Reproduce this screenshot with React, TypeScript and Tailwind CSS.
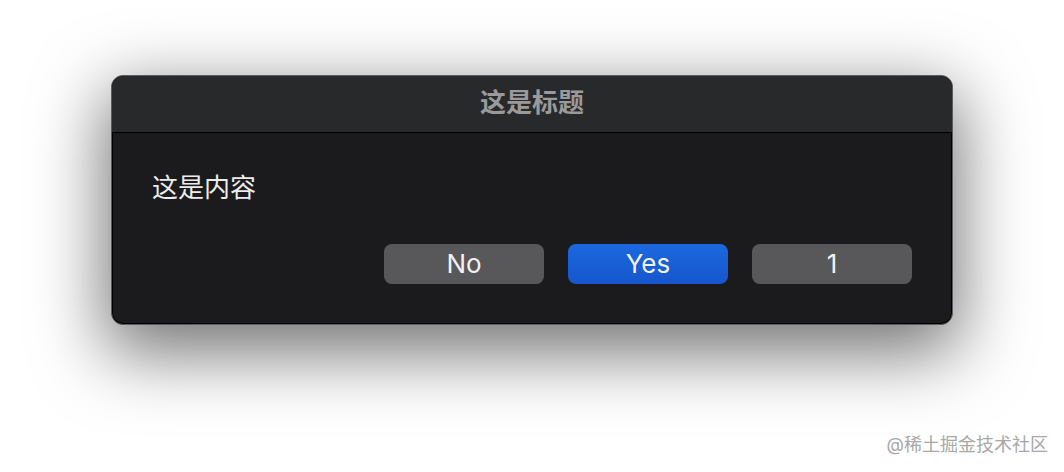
import React from "react";

const cjk = { fontFamily: 'Inter, "Noto Sans CJK SC", sans-serif' };

function Btn({ label, primary }: { label: string; primary?: boolean }) {
  return (
    <div
      className={
        "flex h-[40px] w-[160px] items-center justify-center rounded-[8px] text-[26px] leading-none text-[#f2f2f2] " +
        (primary
          ? "bg-gradient-to-b from-[#1c68e0] to-[#1656cc]"
          : "bg-[#58585a]")
      }
    >
      {label}
    </div>
  );
}

export default function App() {
  return (
    <div className="relative h-[472px] w-[1064px] overflow-hidden bg-white" style={cjk}>
      <div className="pl-[111px] pt-[75px]">
        <div className="flex w-[842px] flex-col overflow-hidden rounded-[12px] border border-[#5c5c5e] bg-[#1b1b1d] shadow-[0_22px_70px_6px_rgba(0,0,0,0.55),inset_0_0_0_1px_#000]">
          <div className="flex h-[57px] items-start justify-center border-b border-black bg-[#28292b] pt-[14px]">
            <span className="text-[26px] font-bold leading-none text-[#9a9a9c]">这是标题</span>
          </div>
          <div className="flex flex-col px-[40px] pt-[42px] pb-[40px]">
            <div className="text-[26px] leading-none text-[#ececec]">这是内容</div>
            <div className="mt-[43px] flex justify-end gap-[24px]">
              <Btn label="No" />
              <Btn label="Yes" primary />
              <Btn label="1" />
            </div>
          </div>
        </div>
      </div>
      <div className="absolute right-[16px] top-[436px] text-[18px] leading-none text-[#a8a8a8] [text-shadow:0_0_2px_#fff]">
        @稀土掘金技术社区
      </div>
    </div>
  );
}
